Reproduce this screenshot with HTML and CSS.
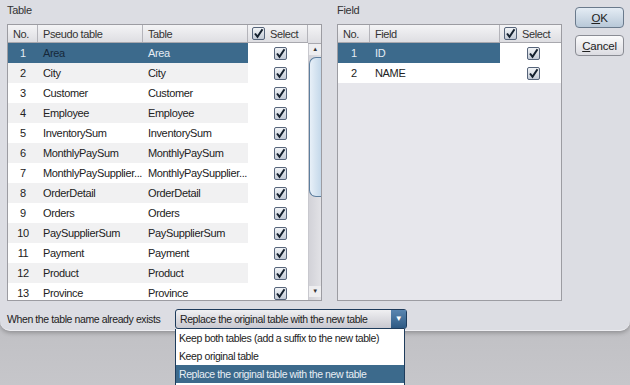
FILE: index.html
```html
<!DOCTYPE html>
<html lang="en">
<head>
    <meta charset="UTF-8">
    <title>Import tables</title>
    <link rel="stylesheet" href="styles.css">
</head>
<body>

<svg width="0" height="0" class="defs">
    <defs>
        <linearGradient id="chkFill" x1="0" y1="0" x2="0" y2="1">
            <stop offset="0" stop-color="#f4f6f8"/>
            <stop offset="1" stop-color="#c0c8d4"/>
        </linearGradient>
        <symbol id="chk" viewBox="0 0 13 13">
            <rect x="0.5" y="0.5" width="12" height="12" rx="1.5" fill="url(#chkFill)" stroke="#56647a"/>
            <path d="M3 6.5 L5.5 9.8 L10.5 2.2" fill="none" stroke="#14202e" stroke-width="2"/>
        </symbol>
    </defs>
</svg>

<div class="dialog">
    <div class="top">
        <div class="panel table-panel">
            <div class="caption">Table</div>
            <div class="box">
                <div class="grid">
                    <div class="head">
                        <div class="hc c-no">No.</div>
                        <div class="hc c-name">Pseudo table</div>
                        <div class="hc c-tab">Table</div>
                        <div class="hc c-sel"><svg class="cb"><use href="#chk"/></svg>Select</div>
                    </div>
                    <div id="tableRows"></div>
                </div>
                <div class="scroll">
                    <div class="hcorner"></div>
                    <div class="track">
                        <div class="arrow up">&#9650;</div>
                        <div class="thumb"></div>
                        <div class="arrow down">&#9660;</div>
                    </div>
                </div>
            </div>
        </div>

        <div class="panel field-panel">
            <div class="caption">Field</div>
            <div class="box fbox">
                <div class="head">
                    <div class="hc f-no">No.</div>
                    <div class="hc f-name">Field</div>
                    <div class="hc f-sel"><svg class="cb"><use href="#chk"/></svg>Select</div>
                </div>
                <div class="row selected">
                    <div class="cell f-no num">1</div>
                    <div class="cell f-name">ID</div>
                    <div class="cell f-sel"><svg class="cb"><use href="#chk"/></svg></div>
                </div>
                <div class="row plain">
                    <div class="cell f-no num">2</div>
                    <div class="cell f-name">NAME</div>
                    <div class="cell f-sel"><svg class="cb"><use href="#chk"/></svg></div>
                </div>
            </div>
        </div>

        <div class="buttons">
            <button class="btn default"><u>O</u>K</button>
            <button class="btn"><u>C</u>ancel</button>
        </div>
    </div>

    <div class="bottom">
        <span class="exists">When the table name already exists</span>
        <div class="combo">
            <div class="combo-text">Replace the original table with the new table</div>
            <div class="combo-arrow">&#9660;</div>
            <ul class="popup">
                <li>Keep both tables (add a suffix to the new table)</li>
                <li>Keep original table</li>
                <li class="picked">Replace the original table with the new table</li>
            </ul>
        </div>
    </div>
</div>

<script>
    const tables = ["Area", "City", "Customer", "Employee", "InventorySum", "MonthlyPaySum",
        "MonthlyPaySupplier...", "OrderDetail", "Orders", "PaySupplierSum", "Payment", "Product", "Province"];
    const rows = document.getElementById("tableRows");

    tables.forEach((name, i) => {
        const row = document.createElement("div");
        row.className = "row" + (i === 0 ? " selected" : (i % 2 ? " striped" : ""));
        row.innerHTML =
            `<div class="cell c-no num">${i + 1}</div>` +
            `<div class="cell c-name">${name}</div>` +
            `<div class="cell c-tab">${name}</div>` +
            `<div class="cell c-sel"><svg class="cb"><use href="#chk"/></svg></div>`;
        rows.appendChild(row);
    });
</script>

</body>
</html>
```

FILE: styles.css
```css
* {
    box-sizing: border-box;
    margin: 0;
    padding: 0;
}
body {
    font-family: "Liberation Sans", Arial, sans-serif;
    font-size: 11px;
    letter-spacing: -0.3px;
    color: #222;
    width: 630px;
    height: 385px;
    overflow: hidden;
    background: linear-gradient(#a2a2a6, #c6c6ca);
}
.defs {
    position: absolute;
}
.dialog {
    height: 331px;
    background: #dcdde3;
    border-bottom: 1px solid #eeeef2;
    border-radius: 0 0 10px 10px;
    padding: 3px 0 0 7px;
    box-shadow: 0 2px 4px rgba(0, 0, 0, 0.25);
}
.top {
    display: flex;
    height: 297px;
}
.caption {
    height: 21px;
    line-height: 14px;
    color: #333;
}
.table-panel {
    width: 330px;
}
.field-panel {
    width: 238px;
}
.box {
    display: flex;
    border: 1px solid #9c9ca2;
    height: 277px;
    overflow: hidden;
    background: #fff;
}
.table-panel .box {
    width: 315px;
}
.fbox {
    display: block;
    width: 225px;
    background: #e7e7ec;
}
.head {
    display: flex;
    height: 18px;
    background: linear-gradient(#f4f4f6, #dedee2);
    border-bottom: 1px solid #a8a8ae;
}
.hc {
    display: flex;
    align-items: center;
    padding-left: 5px;
    border-right: 1px solid #b4b4ba;
    color: #333;
    font-size: 11px;
    letter-spacing: -0.4px;
}
.hc .cb {
    margin-right: 5px;
}
.row {
    display: flex;
    height: 20px;
}
.cell {
    display: flex;
    align-items: center;
    padding-left: 5px;
    white-space: nowrap;
    font-size: 11px;
    letter-spacing: -0.35px;
}
.num {
    justify-content: center;
    padding-left: 0;
}
.striped .c-no,
.striped .c-name,
.striped .c-tab {
    background: #f1f1f2;
}
.plain .cell {
    background: #fff;
}
.selected .c-no,
.selected .c-name,
.selected .c-tab,
.selected .f-no,
.selected .f-name {
    background: #3c6a8c;
    color: #e4ecf4;
}
.selected .c-name {
    color: #16283a;
}
.selected .c-sel,
.selected .f-sel {
    background: #fff;
}
.c-no { width: 30px; }
.c-name { width: 105px; }
.c-tab { width: 105px; }
.c-sel { width: 60px; justify-content: center; }
.hc.c-sel { justify-content: flex-start; padding-left: 4px; }
.f-no { width: 32px; }
.f-name { width: 130px; }
.f-sel { width: 61px; justify-content: center; }
.hc.f-sel { justify-content: flex-start; padding-left: 4px; border-right: none; }
.cb {
    width: 13px;
    height: 13px;
    flex: none;
}
.scroll {
    width: 13px;
    display: flex;
    flex-direction: column;
}
.hcorner {
    height: 19px;
    background: linear-gradient(#f4f4f6, #dedee2);
    border-bottom: 1px solid #a8a8ae;
}
.track {
    flex: 1;
    display: flex;
    flex-direction: column;
    background: linear-gradient(90deg, #d2d2d8, #e2e2e6);
    border-left: 1px solid #c8c8ce;
}
.arrow {
    height: 11px;
    font-size: 6px;
    line-height: 11px;
    text-align: center;
    color: #333;
    background: #eeeef0;
}
.thumb {
    height: 140px;
    margin-top: 2px;
    background: linear-gradient(90deg, #e8f0f8, #c4d8ea);
    border: 1px solid #5d7e9e;
    border-right: none;
    border-radius: 7px 0 0 7px;
}
.arrow.down {
    margin-top: auto;
    margin-bottom: 3px;
}
.buttons {
    display: flex;
    flex-direction: column;
    gap: 7px;
    padding-top: 4px;
}
.btn {
    width: 49px;
    height: 21px;
    font-family: inherit;
    font-size: 11.5px;
    letter-spacing: -0.2px;
    color: #222;
    border: 1px solid #8a8c94;
    border-radius: 4px;
    background: linear-gradient(#fbfbfc, #dcdce2);
}
.btn.default {
    background: linear-gradient(#e4ecf4, #b8c8d8);
    border-color: #6a7a8c;
}
.bottom {
    display: flex;
    align-items: center;
    height: 22px;
    margin-top: 8px;
    font-size: 10.5px;
    letter-spacing: -0.4px;
}
.exists {
    width: 168px;
    white-space: nowrap;
    color: #222;
}
.combo {
    position: relative;
    display: flex;
    width: 232px;
    height: 20px;
    border: 1px solid #1e3c5c;
    border-radius: 3px;
    background: linear-gradient(#f0f0f2, #c8c8d0);
}
.combo-text {
    flex: 1;
    line-height: 18px;
    padding-left: 4px;
    white-space: nowrap;
    color: #222;
}
.combo-arrow {
    width: 15px;
    font-size: 8px;
    line-height: 18px;
    text-align: center;
    color: #fff;
    background: linear-gradient(#5a86b0, #2e5a84);
}
.popup {
    position: absolute;
    top: 19px;
    left: -1px;
    width: 230px;
    list-style: none;
    background: #fff;
    border: 1px solid #1e3c5c;
    border-top: none;
}
.popup li {
    height: 18px;
    line-height: 18px;
    padding-left: 3px;
    white-space: nowrap;
    color: #222;
}
.popup li.picked {
    background: #3c6a8c;
    color: #e8eef4;
    border-bottom: 2px solid #fff;
    height: 20px;
}
```
